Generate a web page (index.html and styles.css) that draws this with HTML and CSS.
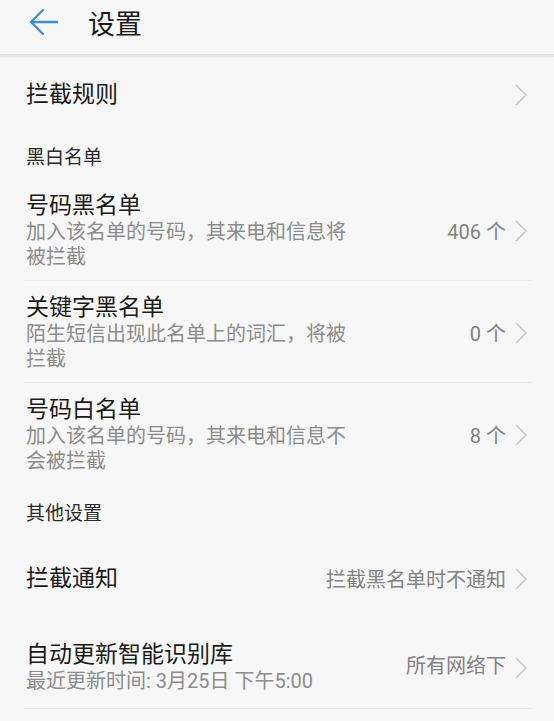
FILE: index.html
```html
<!DOCTYPE html>
<html>
<head>
    <meta charset="utf-8">
    <title>设置</title>
    <link rel="stylesheet" href="styles.css">
</head>
<body>

<header class="topbar">
    <svg class="back" width="30" height="28" viewBox="0 0 30 28">
        <line x1="2" y1="14" x2="28" y2="14" />
        <polyline points="14,2 2,14 14,26" />
    </svg>
    <h1>设置</h1>
</header>

<main class="list">
    <div class="row single">
        <div class="text"><div class="title">拦截规则</div></div>
        <svg class="chev" width="12" height="22" viewBox="0 0 12 22"><polyline points="1,1 11,11 1,21" /></svg>
    </div>

    <div class="section first">黑白名单</div>

    <div class="row item">
        <div class="text">
            <div class="title">号码黑名单</div>
            <div class="desc">加入该名单的号码，其来电和信息将被拦截</div>
        </div>
        <div class="value">406 个</div>
        <svg class="chev" width="12" height="22" viewBox="0 0 12 22"><polyline points="1,1 11,11 1,21" /></svg>
    </div>
    <div class="row item line">
        <div class="text">
            <div class="title">关键字黑名单</div>
            <div class="desc">陌生短信出现此名单上的词汇，将被拦截</div>
        </div>
        <div class="value">0 个</div>
        <svg class="chev" width="12" height="22" viewBox="0 0 12 22"><polyline points="1,1 11,11 1,21" /></svg>
    </div>
    <div class="row item line">
        <div class="text">
            <div class="title">号码白名单</div>
            <div class="desc">加入该名单的号码，其来电和信息不会被拦截</div>
        </div>
        <div class="value">8 个</div>
        <svg class="chev" width="12" height="22" viewBox="0 0 12 22"><polyline points="1,1 11,11 1,21" /></svg>
    </div>

    <div class="section second">其他设置</div>

    <div class="row notify">
        <div class="text"><div class="title">拦截通知</div></div>
        <div class="value">拦截黑名单时不通知</div>
        <svg class="chev" width="12" height="22" viewBox="0 0 12 22"><polyline points="1,1 11,11 1,21" /></svg>
    </div>
    <div class="row update">
        <div class="text">
            <div class="title">自动更新智能识别库</div>
            <div class="desc">最近更新时间: 3月25日 下午5:00</div>
        </div>
        <div class="value">所有网络下</div>
        <svg class="chev" width="12" height="22" viewBox="0 0 12 22"><polyline points="1,1 11,11 1,21" /></svg>
    </div>
</main>

</body>
</html>
```

FILE: styles.css
```css
body {
    margin: 0;
    background: #f7f7f7;
    font-family: Roboto, "Noto Sans CJK SC", sans-serif;
    color: #1a1a1a;
}

.topbar {
    height: 54px;
    display: flex;
    align-items: center;
    border-bottom: 3px solid #e4e4e4;
    box-shadow: 0 1px 2px rgba(0, 0, 0, 0.05);
}

.back {
    margin-left: 29px;
    margin-top: -10px;
    fill: none;
    stroke: #3d8fd6;
    stroke-width: 2.4;
    stroke-linecap: round;
    stroke-linejoin: round;
}

.topbar h1 {
    margin: -10px 0 0 29px;
    font-size: 27px;
    font-weight: normal;
    color: #1a1a1a;
}

.list {
    padding: 0 22px 0 24px;
}

.row {
    display: flex;
    align-items: center;
    padding: 0 5px 0 2px;
}

.text {
    flex: 1;
}

.title {
    font-size: 23px;
    line-height: 28px;
}

.desc {
    max-width: 330px;
    font-size: 20px;
    line-height: 25px;
    color: #8c8c8c;
}

.value {
    font-size: 20px;
    color: #828282;
    margin-right: 9px;
}

.chev {
    fill: none;
    stroke: #c6c6c6;
    stroke-width: 1.5;
}

.single {
    height: 76px;
}

.section {
    padding-left: 2px;
    font-size: 19px;
    line-height: 26px;
    color: #2a2a2a;
}

.section.first {
    padding-top: 12px;
    padding-bottom: 8px;
}

.section.second {
    padding-top: 17px;
    padding-bottom: 8px;
}

.item {
    padding-top: 13px;
    padding-bottom: 10px;
}

.item.line {
    border-top: 1px solid #e9e9e9;
}

.item .value {
    margin-top: -2px;
}

.notify {
    height: 87px;
}

.update {
    padding-top: 19px;
    padding-bottom: 14px;
    border-bottom: 1px solid #e9e9e9;
}

.update .value {
    margin-top: -6px;
}
```
